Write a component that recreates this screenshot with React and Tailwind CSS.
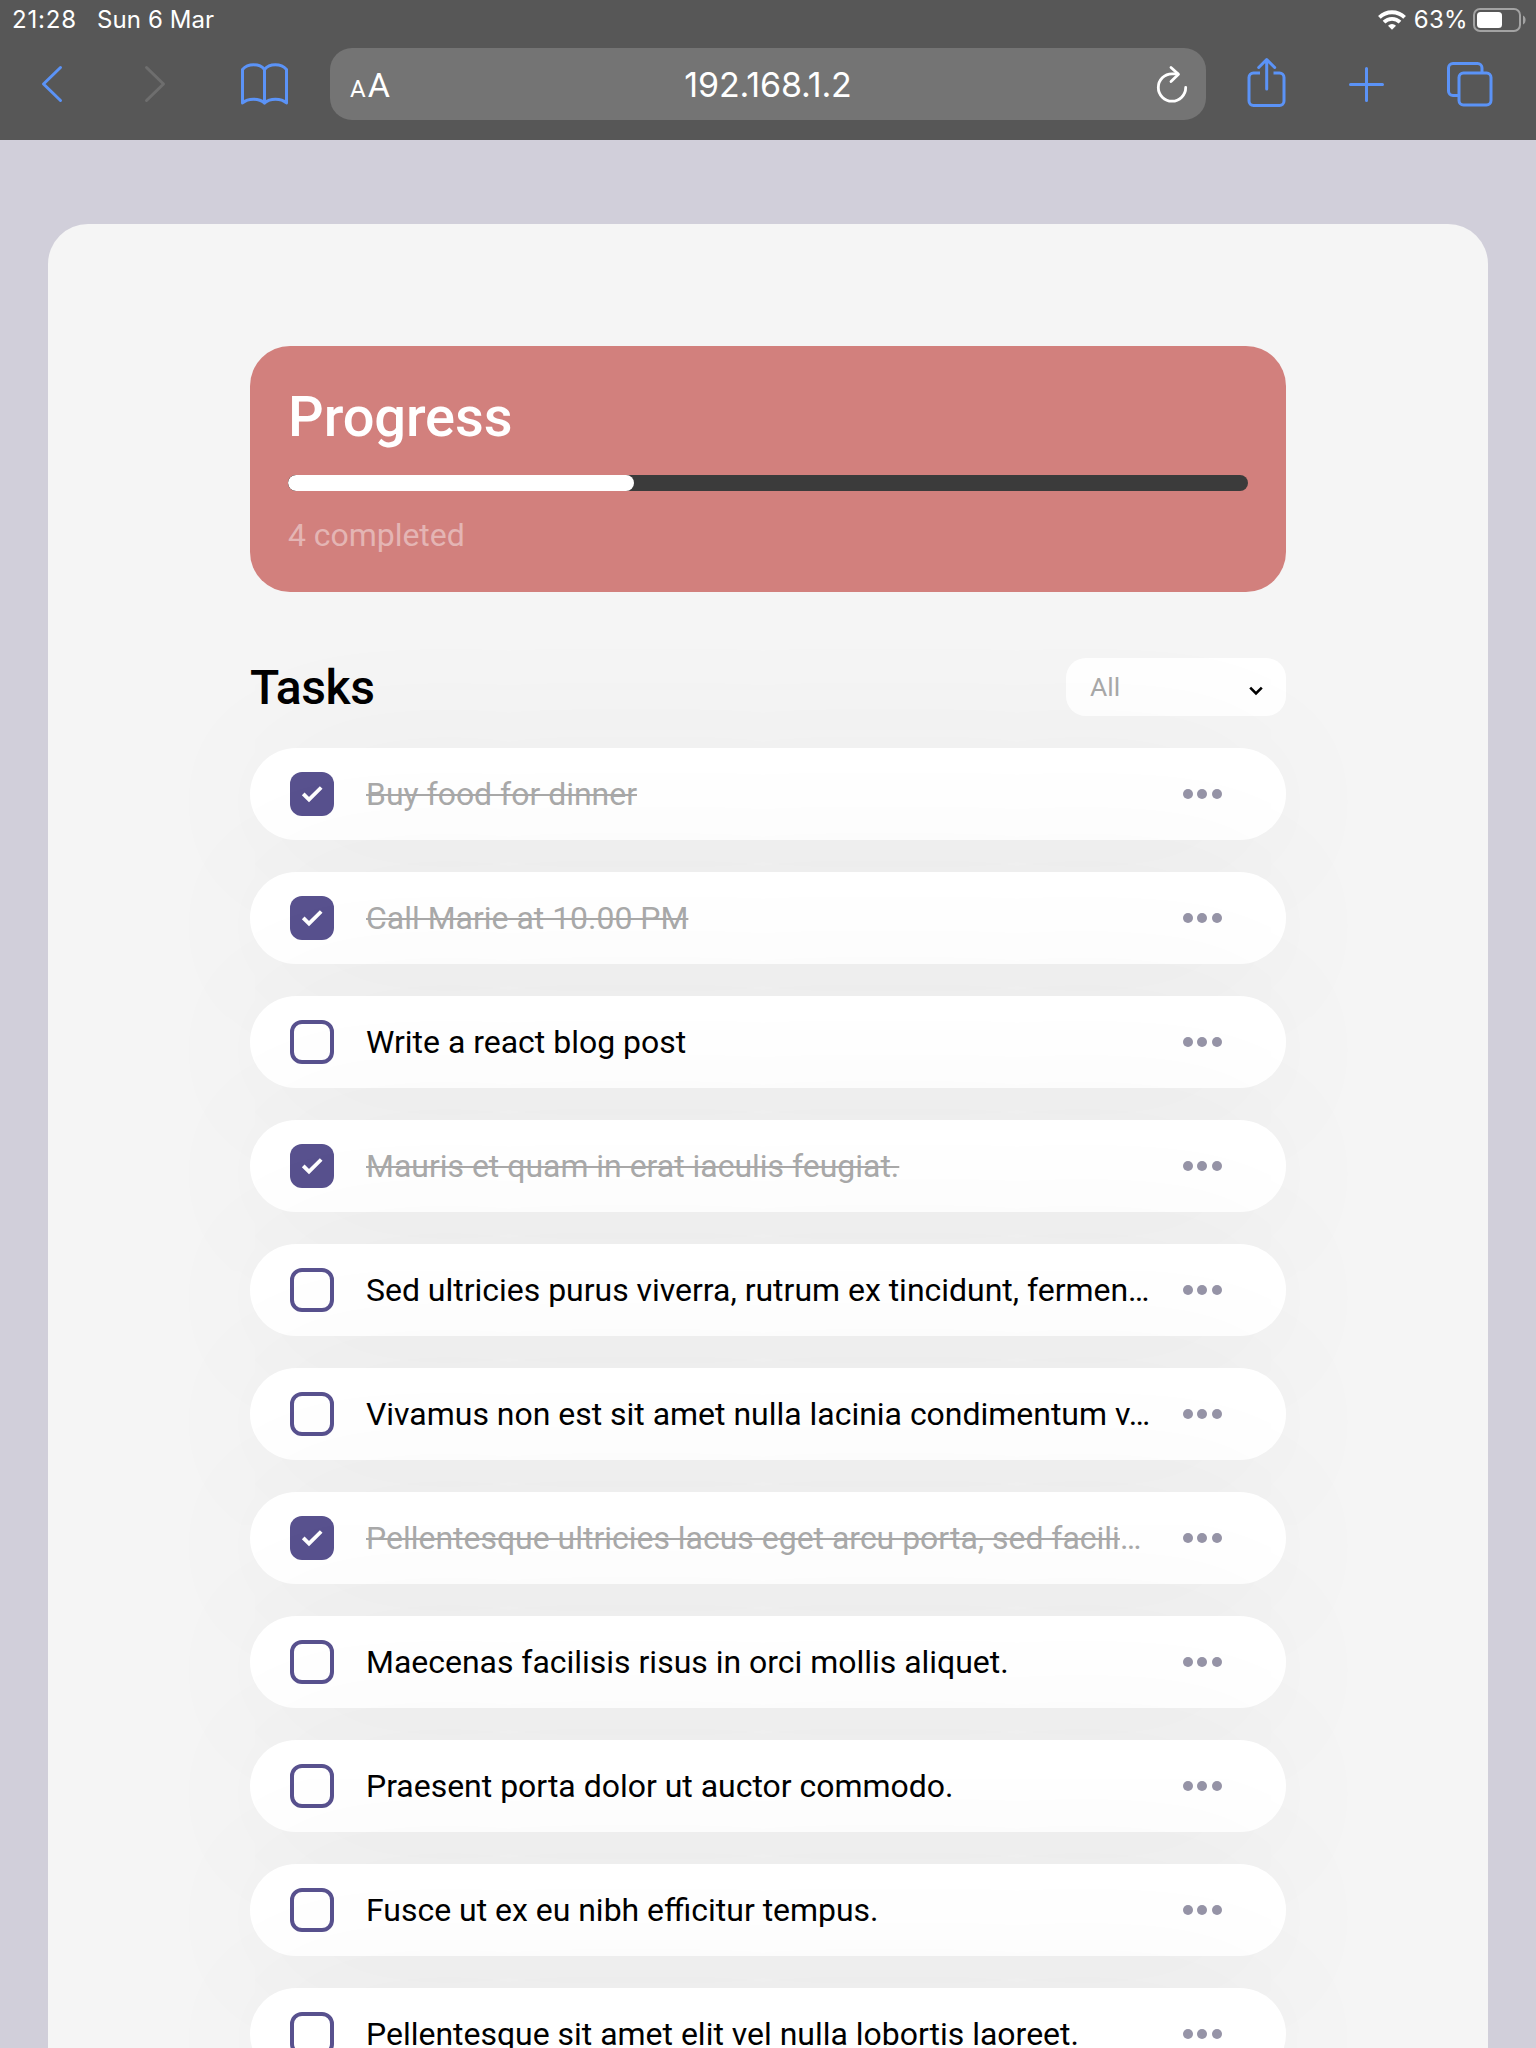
import React from 'react';

const tasks = [
  ['Buy food for dinner', true],
  ['Call Marie at 10.00 PM', true],
  ['Write a react blog post', false],
  ['Mauris et quam in erat iaculis feugiat.', true],
  ['Sed ultricies purus viverra, rutrum ex tincidunt, fermen…', false],
  ['Vivamus non est sit amet nulla lacinia condimentum v…', false],
  ['Pellentesque ultricies lacus eget arcu porta, sed facili…', true],
  ['Maecenas facilisis risus in orci mollis aliquet.', false],
  ['Praesent porta dolor ut auctor commodo.', false],
  ['Fusce ut ex eu nibh efficitur tempus.', false],
  ['Pellentesque sit amet elit vel nulla lobortis laoreet.', false],
];

function StatusBar() {
  return (
    <div className="flex h-10 items-center justify-between pl-3 pr-[9px] text-[24px] leading-10 text-white">
      <div className="flex">
        <span className="w-[85px] tracking-[0.8px]">21:28</span>
        <span className="tracking-[0.1px]">Sun 6 Mar</span>
      </div>
      <div className="flex items-center">
        <svg className="mr-[8px] h-5 w-7" viewBox="0 0 28 20" fill="none" stroke="#fff" strokeWidth="3.8">
          <path d="M1.400 7.400a18 18 0 0 1 25.200 0" />
          <path d="M6 12.200a11.400 11.400 0 0 1 16 0" />
          <path d="M14 19.800l-4-4.100a5.800 5.800 0 0 1 8 0z" fill="#fff" stroke="none" />
        </svg>
        <span className="tracking-[0.3px]">63%</span>
        <svg className="ml-[5px] h-6 w-[54px]" viewBox="0 0 54 24" fill="none">
          <rect x="1" y="1" width="46" height="22" rx="6" stroke="#a3a3a3" strokeWidth="2" />
          <rect x="4" y="4" width="25" height="16" rx="3.500" fill="#fff" />
          <path d="M50 7.500c3.400 1.400 3.400 7.600 0 9z" fill="#a3a3a3" />
        </svg>
      </div>
    </div>
  );
}

function Toolbar() {
  return (
    <div className="flex h-[100px] items-start pt-2">
      <div className="flex h-[72px] w-[330px] shrink-0 items-center pl-[40px]">
        <svg className="h-10 w-6" viewBox="0 0 24 40" fill="none" stroke="#5b93f7" strokeWidth="3" strokeLinecap="round" strokeLinejoin="round">
          <path d="M20.500 3.500L3.500 20l17 16.500" />
        </svg>
        <svg className="ml-[79px] h-10 w-6" viewBox="0 0 24 40" fill="none" stroke="#6e6e6e" strokeWidth="3" strokeLinecap="round" strokeLinejoin="round">
          <path d="M3.500 3.500L20.500 20l-17 16.500" />
        </svg>
        <svg className="ml-[73px] h-[44px] w-[50px]" viewBox="0 0 50 44" fill="none" stroke="#5b93f7" strokeWidth="3" strokeLinecap="round" strokeLinejoin="round">
          <path d="M24.500 7.500C19.500 1.300 8 1.300 2.500 7.500v33.500C8 36 19 36 24.500 41C30 36 41 36 46.500 41V7.500C41 1.300 29.500 1.300 24.500 7.500z" />
          <path d="M24.500 8v33" />
        </svg>
      </div>
      <div className="flex h-[72px] w-[876px] shrink-0 items-center rounded-[22px] bg-[#747474] text-white">
        <div className="flex w-[100px] items-baseline pl-[20px] pt-[2px] font-['Roboto',sans-serif] leading-none">
          <span className="text-[24px]">A</span>
          <span className="ml-[2px] text-[34px]">A</span>
        </div>
        <div className="flex-1 text-center text-[34px] tracking-[-0.150px]">192.168.1.2</div>
        <div className="flex w-[100px] justify-end pr-[17px]">
          <svg className="h-[38px] w-[34px]" viewBox="0 0 34 38" fill="none" stroke="#fff" strokeWidth="2.800" strokeLinecap="round" strokeLinejoin="round">
            <path d="M30.700 22.500a13.700 13.700 0 1 1-13.700-13.700h5.500" />
            <path d="M16 2.500l7.500 6.800L16 16.500" />
          </svg>
        </div>
      </div>
      <div className="flex h-[72px] flex-1 items-center">
        <svg className="-mt-[4px] ml-[40px] h-[50px] w-[42px]" viewBox="0 0 42 50" fill="none" stroke="#5b93f7" strokeWidth="3" strokeLinecap="round" strokeLinejoin="round">
          <path d="M14 16H7.500a4.500 4.500 0 0 0-4.500 4.500v23.500A4.500 4.500 0 0 0 7.500 48.500h26a4.500 4.500 0 0 0 4.500-4.500V20.500A4.500 4.500 0 0 0 33.500 16h-6" strokeLinecap="butt" />
          <path d="M20.700 32V3M12.700 10.500L20.700 2.500l8 8" />
        </svg>
        <svg className="ml-[59px] h-[38px] w-[38px]" viewBox="0 0 38 38" fill="none" stroke="#5b93f7" strokeWidth="3" strokeLinecap="round">
          <path d="M19.500 3.500v32M3.500 19.500h32" />
        </svg>
        <svg className="ml-[60.500px] h-[46px] w-[48px]" viewBox="0 0 48 46" fill="none" stroke="#5b93f7" strokeWidth="3">
          <path d="M12.500 34.500H7A4.500 4.500 0 0 1 2.500 30V7A4.500 4.500 0 0 1 7 2.500h24.500A4.500 4.500 0 0 1 36 7v5" />
          <rect x="13" y="12" width="32" height="32" rx="4.500" />
        </svg>
      </div>
    </div>
  );
}

function Checkbox({ done }) {
  if (!done) return <span className="h-11 w-11 shrink-0 rounded-xl border-4 border-[#58518e]" />;
  return (
    <span className="flex h-11 w-11 shrink-0 items-center justify-center rounded-xl bg-[#58518e]">
      <svg className="h-[18px] w-[22px]" viewBox="0 0 22 18" fill="none" stroke="#fff" strokeWidth="3.800">
        <path d="M2.200 8.800l5.800 5.700L20.200 2.500" />
      </svg>
    </span>
  );
}

function Task({ text, done }) {
  return (
    <li className="flex h-[92px] shrink-0 items-center rounded-full bg-white pl-10 pr-16 shadow-[0_8px_160px_rgba(0,0,0,0.048)]">
      <Checkbox done={done} />
      <span
        className={
          done
            ? 'ml-8 w-[792px] whitespace-nowrap text-[31.960px] leading-[48px] text-[#a9a9a9]'
            : 'ml-8 w-[792px] whitespace-nowrap text-[31.960px] leading-[48px] text-black'
        }
      >
        {done ? <span className="line-through decoration-2">{text.replace('…', '')}</span> : text}
        {done && text.endsWith('…') && '…'}
      </span>
      <span className="ml-[24.500px] flex gap-[4.500px]">
        <i className="h-2.5 w-2.5 rounded-full bg-[#9694a7]" />
        <i className="h-2.5 w-2.5 rounded-full bg-[#9694a7]" />
        <i className="h-2.5 w-2.5 rounded-full bg-[#9694a7]" />
      </span>
    </li>
  );
}

export default function App() {
  return (
    <div className="flex h-[2048px] w-[1536px] flex-col overflow-hidden bg-[#d1cfda] font-['Roboto',sans-serif]">
      <header className="h-[140px] shrink-0 bg-[#575757] font-['Inter',sans-serif]">
        <StatusBar />
        <Toolbar />
      </header>
      <main className="mx-12 mt-[84px] flex-1 overflow-hidden rounded-t-[40px] bg-[#f5f5f5] px-[202px] pt-[122px]">
        <section className="h-[246px] rounded-[40px] bg-[#d2807d] px-[38px] pt-[38px]">
          <h1 className="text-[56px] font-medium leading-[66px] tracking-[-0.100px] text-white">Progress</h1>
          <div className="mt-[25px] h-4 overflow-hidden rounded-full bg-[#3b3b3b]">
            <div className="h-4 w-[346px] rounded-full bg-white" />
          </div>
          <p className="mt-[25px] text-[32px] leading-[38px] tracking-[-0.050px] text-[#e4b5b4]">4 completed</p>
        </section>
        <div className="mt-[66px] flex h-[58px] items-center justify-between">
          <h2 className="pt-[2px] text-[48px] font-medium leading-[58px] tracking-[-0.400px] text-black">Tasks</h2>
          <div className="flex h-[58px] w-[220px] items-center justify-between rounded-[20px] bg-white pl-6 pr-[22px] text-[26.500px] text-[#a9a9a9]">
            <span>All</span>
            <svg className="mt-[7px] h-3 w-4" viewBox="0 0 16 12" fill="none" stroke="#000" strokeWidth="2.600">
              <path d="M2.200 2.600L8 8.400L13.800 2.600" />
            </svg>
          </div>
        </div>
        <ul className="mt-8 flex flex-col gap-8">
          {tasks.map(([text, done]) => (
            <Task key={text} text={text} done={done} />
          ))}
        </ul>
      </main>
    </div>
  );
}
